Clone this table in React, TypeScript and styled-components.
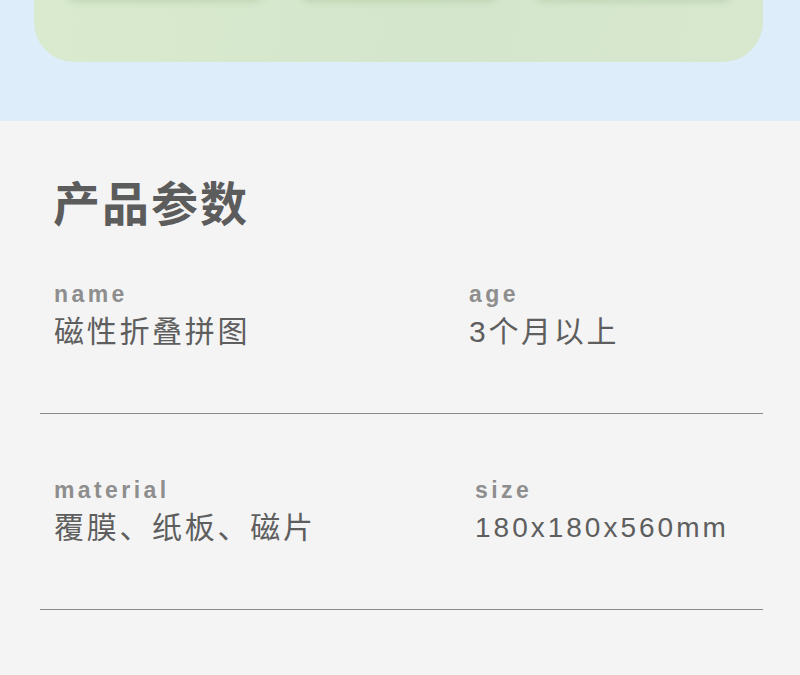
import React from "react";
import styled, { createGlobalStyle } from "styled-components";

const GlobalStyle = createGlobalStyle`
    body {
        margin: 0;
        background: #f4f4f4;
        font-family: "Liberation Sans", "Noto Sans CJK SC", sans-serif;
    }
`;

const Page = styled.div`
    width: 800px;
    min-height: 675px;
    background: #f4f4f4;
`;

const Banner = styled.div`
    height: 121px;
    background: #ddedfa;
    overflow: hidden;
`;

const Card = styled.div`
    height: 100px;
    margin: -38px 37px 0 34px;
    border-radius: 0 0 40px 40px;
    background: linear-gradient(100deg, #d9eacf 0%, #d4e6cb 55%, #d7e8cf 100%);
    display: flex;
    justify-content: center;
    align-items: flex-start;
    gap: 36px;
`;

const Tile = styled.div`
    width: 198px;
    height: 38px;
    border-radius: 0 0 10px 10px;
    background: #d6e8cd;
    box-shadow: 0 2px 7px rgba(110, 150, 90, 0.22);
`;

const Params = styled.section`
    padding: 56px 37px 0 40px;
`;

const Title = styled.h2`
    margin: 0 0 56px 13px;
    font-family: "Noto Sans CJK SC", sans-serif;
    font-weight: 700;
    font-size: 47px;
    line-height: 48px;
    letter-spacing: 2px;
    color: #5c5c5c;
`;

const Row = styled.div<{ $split: number }>`
    display: grid;
    grid-template-columns: ${(p) => p.$split}px 1fr;
    padding: 0 0 63px 14px;
`;

const Field = styled.div`
    display: flex;
    flex-direction: column;
    gap: 7px;
`;

const Label = styled.span`
    font-family: "Liberation Sans", sans-serif;
    font-weight: 700;
    font-size: 23px;
    line-height: 26px;
    letter-spacing: 3.4px;
    color: #8e8e8e;
`;

const Value = styled.span<{ $latin?: boolean }>`
    font-family: "Liberation Sans", "Noto Sans CJK SC", sans-serif;
    font-size: ${(p) => (p.$latin ? 28 : 30)}px;
    line-height: 36px;
    letter-spacing: ${(p) => (p.$latin ? 3 : 2.7)}px;
    color: #5e5e5e;
    white-space: nowrap;
`;

const Divider = styled.hr<{ $gap: boolean }>`
    margin: 0 0 ${(p) => (p.$gap ? 63 : 0)}px;
    border: 0;
    border-top: 1px solid #8a8a8a;
`;

const rows = [
    {
        split: 415,
        fields: [
            { label: "name", value: "磁性折叠拼图" },
            { label: "age", value: "3个月以上" },
        ],
    },
    {
        split: 421,
        fields: [
            { label: "material", value: "覆膜、纸板、磁片" },
            { label: "size", value: "180x180x560mm", latin: true },
        ],
    },
];

export default function App() {
    return (
        <Page>
            <GlobalStyle />
            <Banner>
                <Card>
                    <Tile />
                    <Tile />
                    <Tile />
                </Card>
            </Banner>
            <Params>
                <Title>产品参数</Title>
                {rows.map((row, i) => (
                    <React.Fragment key={i}>
                        <Row $split={row.split}>
                            {row.fields.map((f) => (
                                <Field key={f.label}>
                                    <Label>{f.label}</Label>
                                    <Value $latin={f.latin}>{f.value}</Value>
                                </Field>
                            ))}
                        </Row>
                        <Divider $gap={i < rows.length - 1} />
                    </React.Fragment>
                ))}
            </Params>
        </Page>
    );
}
